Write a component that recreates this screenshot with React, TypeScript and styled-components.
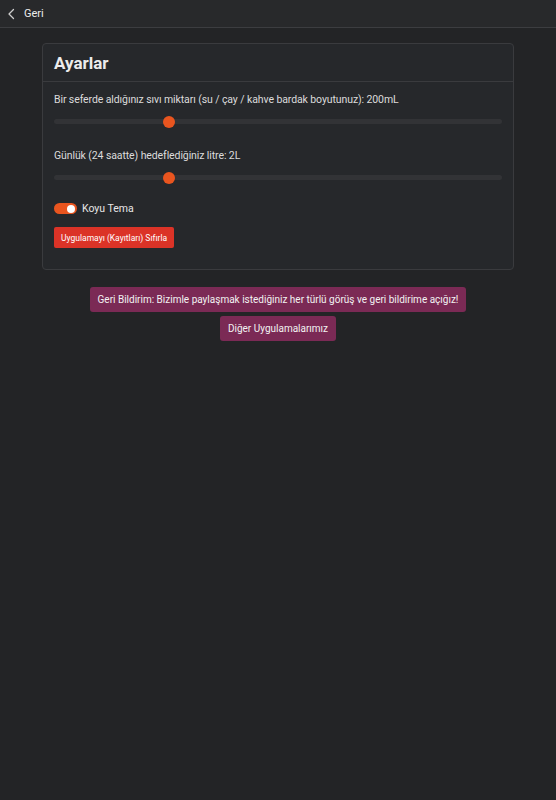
import styled, { createGlobalStyle } from 'styled-components';

const GlobalStyle = createGlobalStyle`
  html, body {
    margin: 0;
    padding: 0;
    background: #232426;
    min-height: 100%;
  }
  body {
    font-family: Roboto, 'Liberation Sans', sans-serif;
    color: #e4e4e4;
  }
  * {
    box-sizing: border-box;
  }
`;

function Slider({ percent }: { percent: number }) {
  return (
    <SliderTrack>
      <SliderThumb style={{ left: `${percent}%` }} />
    </SliderTrack>
  );
}

export default function App() {
  return (
    <>
      <GlobalStyle />
      <Header>
        <BackBtn>
          <svg width='10' height='12' viewBox='0 0 10 12' fill='none'>
            <path d='M6.5 1.5L2 6l4.5 4.5' stroke='#cfcfcf' strokeWidth='1.3' strokeLinecap='round' strokeLinejoin='round' />
          </svg>
          <span>Geri</span>
        </BackBtn>
      </Header>
      <Main>
        <Card>
          <CardHeader>
            <CardTitle>Ayarlar</CardTitle>
          </CardHeader>
          <CardBody>
            <Field>
              <Label>Bir seferde aldığınız sıvı miktarı (su / çay / kahve bardak boyutunuz): 200mL</Label>
              <Slider percent={25.6} />
            </Field>
            <Field>
              <Label>Günlük (24 saatte) hedeflediğiniz litre: 2L</Label>
              <Slider percent={25.6} />
            </Field>
            <SwitchRow>
              <Switch $on>
                <Knob />
              </Switch>
              <SwitchLabel>Koyu Tema</SwitchLabel>
            </SwitchRow>
            <ResetBtn>Uygulamayı (Kayıtları) Sıfırla</ResetBtn>
          </CardBody>
        </Card>
        <LinkGroup>
          <LinkBtn>Geri Bildirim: Bizimle paylaşmak istediğiniz her türlü görüş ve geri bildirime açığız!</LinkBtn>
          <LinkBtn>Diğer Uygulamalarımız</LinkBtn>
        </LinkGroup>
      </Main>
    </>
  );
}

const Header = styled.header`
  height: 28px;
  border-bottom: 1px solid #3c3d40;
  background: #28292b;
  display: flex;
  align-items: center;
  padding-left: 7px;
`;

const BackBtn = styled.div`
  display: flex;
  align-items: center;
  gap: 7px;
  font-size: 11px;
  color: #ececec;
  span {
    margin-top: -1px;
  }
`;

const Main = styled.main`
  width: 472px;
  margin: 0 auto;
  padding-top: 15px;
`;

const Card = styled.section`
  background: #26282b;
  border: 1px solid #3a3b3e;
  border-radius: 4px;
`;

const CardHeader = styled.div`
  height: 38px;
  display: flex;
  align-items: center;
  padding: 0 11px;
  border-bottom: 1px solid #3a3b3e;
`;

const CardTitle = styled.h2`
  margin: 0;
  font-size: 17px;
  font-weight: 700;
  color: #ececec;
`;

const CardBody = styled.div`
  padding: 11px 11px 21px;
  display: flex;
  flex-direction: column;
`;

const Field = styled.div`
  display: flex;
  flex-direction: column;
  & + & {
    margin-top: 25px;
  }
`;

const Label = styled.div`
  font-size: 10.5px;
  line-height: 14px;
  color: #dcdcdc;
  letter-spacing: -0.1px;
`;

const SliderTrack = styled.div`
  position: relative;
  height: 5px;
  margin-top: 12px;
  border-radius: 3px;
  background: #323336;
`;

const SliderThumb = styled.div`
  position: absolute;
  top: 50%;
  width: 12px;
  height: 12px;
  margin: -6px 0 0 -6px;
  border-radius: 50%;
  background: #e9551f;
`;

const SwitchRow = styled.div`
  display: flex;
  align-items: center;
  gap: 5px;
  margin-top: 22px;
`;

const Switch = styled.div<{ $on?: boolean }>`
  width: 23px;
  height: 11px;
  border-radius: 6px;
  background: ${(p) => (p.$on ? '#e9551f' : '#555')};
  display: flex;
  align-items: center;
  justify-content: ${(p) => (p.$on ? 'flex-end' : 'flex-start')};
  padding: 0 2px;
`;

const Knob = styled.div`
  width: 8px;
  height: 8px;
  border-radius: 50%;
  background: #ffffff;
`;

const SwitchLabel = styled.span`
  font-size: 10.5px;
  color: #e6e6e6;
`;

const ResetBtn = styled.button`
  align-self: flex-start;
  margin-top: 12px;
  height: 21px;
  padding: 0 7px;
  border: none;
  border-radius: 2px;
  background: #db3327;
  color: #ffffff;
  font-family: Roboto, 'Liberation Sans', sans-serif;
  font-size: 8.5px;
`;

const LinkGroup = styled.div`
  display: flex;
  flex-direction: column;
  align-items: center;
  gap: 4px;
  margin-top: 17px;
`;

const LinkBtn = styled.button`
  height: 25px;
  padding: 0 8px;
  border: none;
  border-radius: 3px;
  background: #7b2a55;
  color: #f2f2f2;
  font-family: Roboto, 'Liberation Sans', sans-serif;
  font-size: 10px;
  white-space: nowrap;
`;
